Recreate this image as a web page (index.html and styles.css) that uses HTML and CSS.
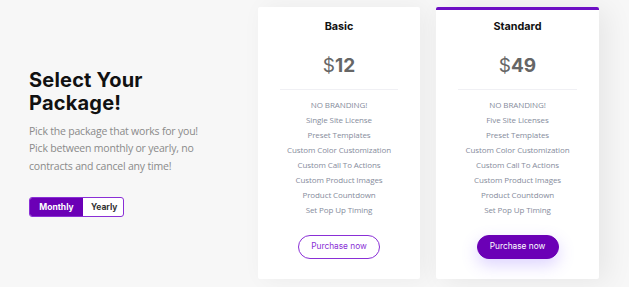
FILE: index.html
```html
<!DOCTYPE html>
<html lang="en">
<head>
  <meta charset="UTF-8" />
  <meta name="viewport" content="width=device-width, initial-scale=1.0"/>
  <title>Select Your Package</title>
  <link rel="stylesheet" href="styles.css">
</head>
<body>
  <div class="pricing">
    <div class="intro">
      <h1>Select Your<br>Package!</h1>
      <p>Pick the package that works for you! Pick between monthly or yearly, no contracts and cancel any time!</p>
      <div class="toggle">
        <span class="toggle-opt active">Monthly</span>
        <span class="toggle-opt">Yearly</span>
      </div>
    </div>

    <div class="card">
      <h2>Basic</h2>
      <div class="price"><span class="cur">$</span>12</div>
      <ul class="features">
        <li>NO BRANDING!</li>
        <li>Single Site License</li>
        <li>Preset Templates</li>
        <li>Custom Color Customization</li>
        <li>Custom Call To Actions</li>
        <li>Custom Product Images</li>
        <li>Product Countdown</li>
        <li>Set Pop Up Timing</li>
      </ul>
      <a class="buy" href="#">Purchase now</a>
    </div>

    <div class="card featured">
      <h2>Standard</h2>
      <div class="price"><span class="cur">$</span>49</div>
      <ul class="features">
        <li>NO BRANDING!</li>
        <li>Five Site Licenses</li>
        <li>Preset Templates</li>
        <li>Custom Color Customization</li>
        <li>Custom Call To Actions</li>
        <li>Custom Product Images</li>
        <li>Product Countdown</li>
        <li>Set Pop Up Timing</li>
      </ul>
      <a class="buy" href="#">Purchase now</a>
    </div>
  </div>
</body>
</html>
```

FILE: styles.css
```css
body {
  margin: 0;
  padding: 0;
  background: #f7f7f7;
  font-family: 'Open Sans', sans-serif;
  overflow: hidden;
}

.pricing {
  display: flex;
  align-items: center;
  padding: 7px 0 8px 29px;
}

.intro {
  width: 229px;
}

h1 {
  margin: 0 0 8px;
  font-family: 'Inter', sans-serif;
  font-weight: 700;
  font-size: 20px;
  line-height: 23px;
  color: #111;
  letter-spacing: 0.2px;
}

.intro p {
  margin: 0;
  width: 190px;
  font-size: 10.5px;
  letter-spacing: -0.2px;
  line-height: 17.5px;
  color: #8a8a8a;
}

.toggle {
  display: inline-flex;
  margin-top: 22px;
  border: 1.5px solid #8a2fd6;
  border-radius: 3px;
  overflow: hidden;
  background: #fff;
}

.toggle-opt {
  font-family: 'Inter', sans-serif;
  font-weight: 700;
  font-size: 8.5px;
  line-height: 18px;
  color: #333;
  padding: 0 8px;
  width: 24px;
  text-align: center;
}

.toggle-opt.active {
  background: #6b00b6;
  color: #fff;
  width: 37px;
}

.card {
  width: 162px;
  height: 272px;
  box-sizing: border-box;
  margin-right: 16px;
  padding: 12px 0 0;
  background: #fff;
  border-radius: 2px;
  text-align: center;
  box-shadow: 6px 0 24px rgba(0, 0, 0, 0.05);
}

.card.featured {
  width: 163px;
  border-top: 3px solid #6d0fc4;
  padding-top: 9px;
  box-shadow: 8px 2px 28px rgba(0, 0, 0, 0.07);
}

.card h2 {
  margin: 0;
  font-family: 'Inter', sans-serif;
  font-weight: 700;
  font-size: 10.8px;
  line-height: 16px;
  color: #111;
}

.price {
  margin: 17px 22px 0;
  padding-bottom: 9px;
  border-bottom: 1px solid #f0f0f4;
  font-family: 'Inter', sans-serif;
  font-weight: 700;
  font-size: 19px;
  line-height: 28px;
  color: #666;
}

.price .cur {
  font-weight: 400;
}

.features {
  list-style: none;
  margin: 7px 0 0;
  padding: 0;
  font-size: 8px;
  letter-spacing: -0.1px;
  line-height: 15px;
  color: #868c9c;
}

.buy {
  display: inline-block;
  margin-top: 18px;
  width: 82px;
  height: 24px;
  box-sizing: border-box;
  border: 1.5px solid #8a2fd6;
  border-radius: 12px;
  font-family: 'Inter', sans-serif;
  font-size: 8.3px;
  line-height: 21px;
  color: #8a2fd6;
  text-decoration: none;
}

.featured .buy {
  background: #6b00b6;
  border-color: #6b00b6;
  color: #fff;
  box-shadow: 0 6px 16px rgba(120, 80, 255, 0.25);
}
```
